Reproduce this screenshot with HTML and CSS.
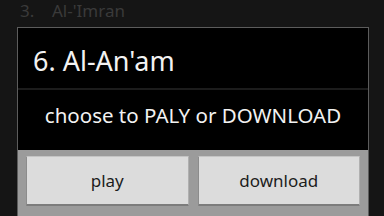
FILE: index.html
```html
<!DOCTYPE html>
<html lang="en">
<head>
    <meta charset="UTF-8">
    <title>Surah dialog</title>
    <link rel="stylesheet" href="styles.css">
</head>
<body>
    <div class="list-item"><span class="num">3.</span>Al-'Imran</div>
    <div class="dialog">
        <div class="dialog-title">6. Al-An'am</div>
        <div class="dialog-message">choose to PALY or DOWNLOAD</div>
        <div class="dialog-buttons">
            <button>play</button>
            <button>download</button>
        </div>
    </div>
</body>
</html>
```

FILE: styles.css
```css
body {
    margin: 0;
    width: 384px;
    height: 216px;
    overflow: hidden;
    background: #151515;
    font-family: "Noto Sans", "Open Sans", sans-serif;
}

.list-item {
    height: 26px;
    padding: 1px 0 0 20px;
    font-size: 17px;
    line-height: 20px;
    color: #3a3a3a;
}

.list-item .num {
    display: inline-block;
    width: 32px;
}

.dialog {
    margin-left: 17px;
    width: 350px;
    border: 1px solid #5c5c5c;
    border-bottom: none;
    background: #000;
}

.dialog-title {
    height: 57px;
    padding: 3px 0 0 15px;
    font-size: 27px;
    line-height: 60px;
    color: #f2f2f2;
    border-bottom: 2px solid #1c1c1c;
}

.dialog-message {
    height: 60px;
    text-align: center;
    font-size: 20.5px;
    line-height: 50px;
    color: #f2f2f2;
}

.dialog-buttons {
    display: flex;
    gap: 9px;
    padding: 6px 8px 20px 8px;
    background: #9b9b9b;
}

button {
    flex: 1;
    height: 50px;
    padding: 0;
    border: 1px solid #8c8c8c;
    border-top-color: #c4c4c4;
    border-right-color: #b0b0b0;
    border-bottom: 2px solid #7c7c7c;
    border-radius: 1px;
    background: #dcdcdc;
    font-family: "Noto Sans", "Open Sans", sans-serif;
    font-size: 17px;
    color: #1c1c1c;
}
```
